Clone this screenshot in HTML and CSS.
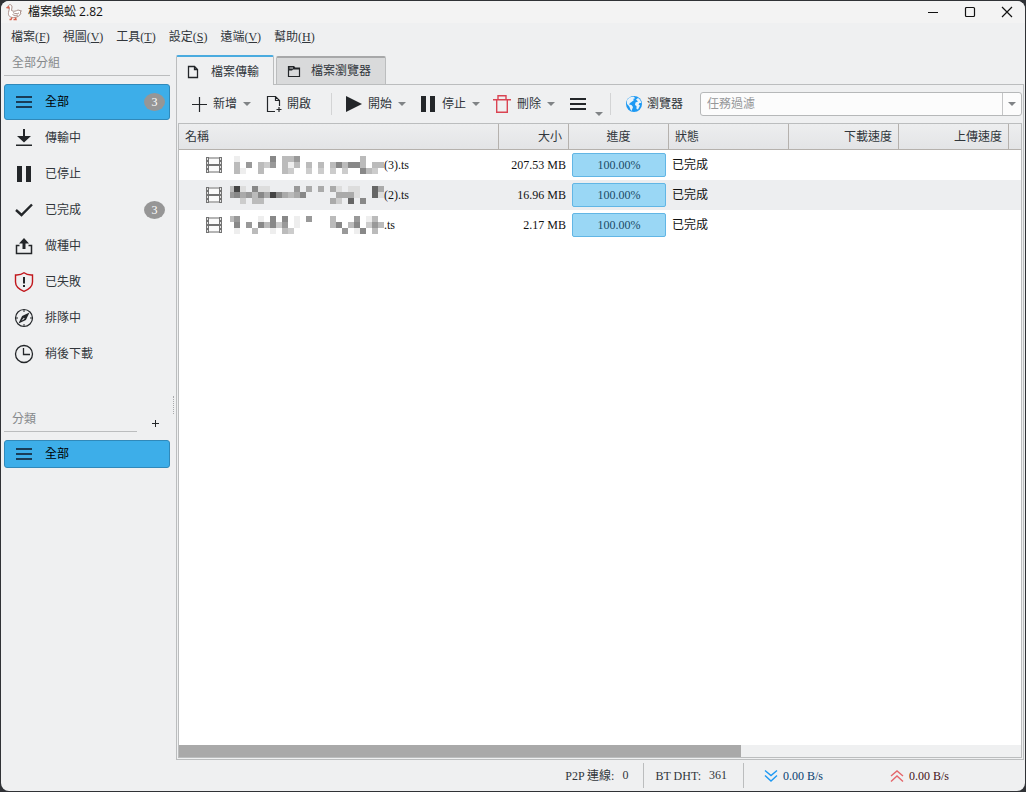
FILE: index.html
```html
<!DOCTYPE html>
<html lang="zh-Hant">
<head>
<meta charset="utf-8">
<title>檔案蜈蚣 2.82</title>
<link rel="stylesheet" href="styles.css">
</head>
<body>
<div class="window">
  <header class="titlebar">
    <svg class="logo" width="16" height="18" viewBox="0 0 16 18" fill="#fff" stroke="#a98f89" stroke-width="1"><path d="M2 3.500C2.500 1 6 1 6 4L5.500 7.500C8 9 10 8 12 7l3.500 1-1.500 1 1 1c-1 3-4 4.500-7.500 4.500S2 13 2.500 9.500L3.500 5z"/><path d="M7 9.500c2 1.500 4 1.500 6 .5M6.500 11.500c2 1.500 4 1 5.500.500"/><path d="M3 3.500L.5 4.700l2.500.5z" fill="#e0705a" stroke="#d8604c"/><path d="M6 14.500L5 16.500H3.500M9.500 14.500l.5 2H7.500" fill="none" stroke="#d8604c" stroke-width="1.400"/></svg>
    <h1 class="title">檔案蜈蚣 2.82</h1>
    <div class="window-buttons">
      <button aria-label="最小化"><svg width="12" height="12" viewBox="0 0 12 12"><path d="M1 6.500h10"/></svg></button>
      <button aria-label="最大化"><svg width="12" height="12" viewBox="0 0 12 12"><rect x="1.500" y="1.500" width="9" height="9" rx="1"/></svg></button>
      <button aria-label="關閉"><svg width="12" height="12" viewBox="0 0 12 12"><path d="M1 1l10 10M11 1L1 11"/></svg></button>
    </div>
  </header>
  <nav class="menubar">
    <button>檔案(<u>F</u>)</button>
    <button>視圖(<u>V</u>)</button>
    <button>工具(<u>T</u>)</button>
    <button>設定(<u>S</u>)</button>
    <button>遠端(<u>V</u>)</button>
    <button>幫助(<u>H</u>)</button>
  </nav>
  <div class="workspace">
    <aside class="sidebar">
      <h2 class="group-title">全部分組</h2>
      <div class="groups">
        <button class="side-item selected"><svg width="20" height="20" viewBox="0 0 20 20" fill="#1a3c56"><path d="M2 4h16v2H2zM2 9h16v2H2zM2 14h16v2H2z"/></svg><span>全部</span><span class="badge">3</span></button>
        <button class="side-item"><svg width="20" height="20" viewBox="0 0 20 20" fill="#232629"><path d="M9 1h2v7h6l-7 6.500L3 8h6zM2 16.500h16V18H2z"/></svg><span>傳輸中</span></button>
        <button class="side-item"><svg width="20" height="20" viewBox="0 0 20 20" fill="#232629"><path d="M3 2h5v16H3zM12 2h5v16h-5z"/></svg><span>已停止</span></button>
        <button class="side-item"><svg width="20" height="20" viewBox="0 0 20 20" fill="none" stroke="#232629" stroke-width="2.400"><path d="M2 10l5.500 5L18 4.500"/></svg><span>已完成</span><span class="badge">3</span></button>
        <button class="side-item"><svg width="20" height="20" viewBox="0 0 20 20"><path d="M10 2l5 5.500h-3.500V13h-3V7.500H5z" fill="#232629"/><path d="M5.500 9.500h-3v8h15v-8h-3" fill="none" stroke="#232629" stroke-width="1.500"/></svg><span>做種中</span></button>
        <button class="side-item"><svg width="20" height="20" viewBox="0 0 20 20"><path d="M10 .8c2.500 2 5.500 2.400 8.500 2.200v7c0 4.500-4 7.500-8.500 9.300C5.500 17.500 1.500 14.500 1.500 10V3C4.500 3.200 7.500 2.800 10 .8z" fill="none" stroke="#c1171c" stroke-width="1.400"/><path d="M9 5h2v6.500H9zM9 13h2v2H9z" fill="#232629"/></svg><span>已失敗</span></button>
        <button class="side-item"><svg width="20" height="20" viewBox="0 0 20 20"><circle cx="10" cy="10" r="8.500" fill="none" stroke="#232629" stroke-width="1.200"/><path d="M10 2v2M10 16v2M2 10h2M16 10h2" stroke="#232629"/><path d="M15.500 4.500l-3.600 7.400L4.500 15.500l3.600-7.400z" fill="#232629"/><path d="M9.300 11.800l1.400-1.200-.8-.8-2.600 3z" fill="#eff0f1"/></svg><span>排隊中</span></button>
        <button class="side-item"><svg width="20" height="20" viewBox="0 0 20 20" fill="none" stroke="#232629" stroke-width="1.300"><circle cx="10" cy="10" r="8.500"/><path d="M9.500 4v6.500H16"/></svg><span>稍後下載</span></button>
      </div>
      <div class="category-head">
        <h2 class="group-title">分類</h2>
        <button class="add" aria-label="新增分類"><svg width="7" height="7" viewBox="0 0 7 7"><path d="M0 3.500h7M3.500 0v7" stroke="#232629"/></svg></button>
      </div>
      <button class="side-item compact selected"><svg width="20" height="20" viewBox="0 0 20 20" fill="#1a3c56"><path d="M2 4h16v2H2zM2 9h16v2H2zM2 14h16v2H2z"/></svg><span>全部</span></button>
    </aside>
    <div class="splitter"><span></span></div>
    <main class="main">
      <div class="tabs" role="tablist">
        <button class="tab active" role="tab" aria-selected="true"><svg width="12" height="14" viewBox="0 0 12 14" fill="none" stroke="#232629" stroke-width="1.300"><path d="M1.500 1.500h6l3 3v8h-9zM7.500 1.500v3h3"/></svg>檔案傳輸</button>
        <button class="tab" role="tab" aria-selected="false"><svg width="14" height="14" viewBox="0 0 14 14"><path d="M1.500 3v9.500h11V4H8L6.500 2.500h-5z" fill="none" stroke="#232629" stroke-width="1.200"/><path d="M1 2h6l1 2h5v1.500H6L5 6.500H1z" fill="#232629"/><path d="M2.500 3.500H6v1H2.500z" fill="#d9dadb"/></svg>檔案瀏覽器</button>
      </div>
      <div class="panel">
        <div class="toolbar">
          <button class="tool"><svg width="16" height="16" viewBox="0 0 16 16"><path d="M8.500 1v15M1 8.500h15" stroke="#232629" stroke-width="1.200"/></svg>新增<i class="caret"></i></button>
          <button class="tool open"><svg width="16" height="18" viewBox="0 0 16 18" fill="none" stroke="#232629" stroke-width="1.200"><path d="M9 16.500H1.500v-15h8l4 4V11M9.500 1.500v4h4M13 12v5M10.500 14.500h5"/></svg>開啟</button>
          <span class="sep"></span>
          <button class="tool start"><svg width="16" height="16" viewBox="0 0 16 16" fill="#232629"><path d="M0 0l16 8L0 16z"/></svg>開始<i class="caret"></i></button>
          <button class="tool pause"><svg width="15" height="16" viewBox="0 0 15 16" fill="#232629"><path d="M0 0h5v16H0zM9 0h5v16H9z"/></svg>停止<i class="caret"></i></button>
          <button class="tool"><svg width="18" height="18" viewBox="0 0 18 18" fill="none" stroke="#da4453" stroke-width="1.400"><path d="M0 4.700h18M5 4V.7h8V4M3.700 5v12.300h10.600V5"/></svg>刪除<i class="caret"></i></button>
          <button class="tool more" aria-label="更多"><svg width="16" height="12" viewBox="0 0 16 12" fill="#232629"><path d="M0 0h16v2H0zM0 5h16v2H0zM0 10h16v2H0z"/></svg><i class="caret low"></i></button>
          <span class="sep near"></span>
          <button class="tool browse"><svg width="16" height="16" viewBox="0 0 16 16"><circle cx="8" cy="8" r="8" fill="#1d99f3"/><path d="M1 4.500C2.500 1.500 5 .6 8 .8l1 1.500-2 .7 1 1-2.500 2L4 7l-1 1.500 2.500.5 1.500 2-1.500 4C4 13.500 4 11 2.500 9.500L1 8zM10 3.500l2-1.500c2 1 3 3 3.200 5L13.500 7l-1 1.500 1.500 1-2 4-1.500-.5v-3L9 9l.5-2.500 2.500-1z" fill="#e9f2f8"/></svg>瀏覽器</button>
          <div class="filter">
            <input type="text" placeholder="任務過濾" aria-label="任務過濾">
            <button aria-label="過濾紀錄"><i class="caret"></i></button>
          </div>
        </div>
        <div class="table-frame">
          <table class="tasks">
            <colgroup><col class="c-name"><col class="c-size"><col class="c-progress"><col class="c-status"><col class="c-down"><col class="c-up"><col></colgroup>
            <thead>
              <tr><th>名稱</th><th class="right">大小</th><th class="center">進度</th><th>狀態</th><th class="right">下載速度</th><th class="right">上傳速度</th><th></th></tr>
            </thead>
            <tbody>
              <tr><td><div class="file"><svg class="film" width="16" height="16" viewBox="0 0 16 16"><use href="#film"/></svg><svg class="mosaic" width="154" height="30"></svg><span>(3).ts</span></div></td><td class="right">207.53 MB</td><td class="progress"><div>100.00%</div></td><td class="status">已完成</td><td></td><td></td><td></td></tr>
              <tr><td><div class="file"><svg class="film" width="16" height="16" viewBox="0 0 16 16"><use href="#film"/></svg><svg class="mosaic" width="154" height="30"></svg><span>(2).ts</span></div></td><td class="right">16.96 MB</td><td class="progress"><div>100.00%</div></td><td class="status">已完成</td><td></td><td></td><td></td></tr>
              <tr><td><div class="file"><svg class="film" width="16" height="16" viewBox="0 0 16 16"><use href="#film"/></svg><svg class="mosaic" width="154" height="30"></svg><span>.ts</span></div></td><td class="right">2.17 MB</td><td class="progress"><div>100.00%</div></td><td class="status">已完成</td><td></td><td></td><td></td></tr>
            </tbody>
          </table>
          <div class="scrollbar"><span></span></div>
        </div>
      </div>
    </main>
  </div>
  <footer class="statusbar">
    <div class="stat p2p"><span>P2P 連線:</span><span class="value">0</span></div>
    <div class="stat dht"><span>BT DHT:</span><span class="value">361</span></div>
    <div class="speed down"><svg width="14" height="14" viewBox="0 0 14 14"><path d="M1 1.500l6 5 6-5M1 6.500l6 5.500 6-5.500"/></svg>0.00 B/s</div>
    <div class="speed up"><svg width="14" height="14" viewBox="0 0 14 14"><path d="M1 7l6-5 6 5M1 12.500l6-5.500 6 5.500"/></svg>0.00 B/s</div>
  </footer>
</div>
<svg class="symbols" width="0" height="0"><symbol id="film" viewBox="0 0 16 16"><path d="M0 0h16v16H0z" fill="#b4b4b4"/><path d="M3 2h10v5H3zM3 9h10v5H3z" fill="#fafafa"/><path d="M0 0h3v16H0zM13 0h3v16h-3zM3 7h10v2H3z" fill="#737373"/><path d="M1 1h1v2H1zM1 5h1v2H1zM1 9h1v2H1zM1 13h1v2H1zM14 1h1v2h-1zM14 5h1v2h-1zM14 9h1v2h-1zM14 13h1v2h-1z" fill="#e4e4e4"/></symbol></svg>
<script src="mosaic.js"></script>
</body>
</html>
```

FILE: styles.css
```css
* { box-sizing: border-box; }
html, body { height: 100%; margin: 0; }
body {
  background: #303236;
  padding: 1px;
  font: 400 12px/16px "Liberation Serif", "Noto Sans CJK TC", serif;
  color: #31363b;
}
button, input { font: inherit; color: inherit; background: none; border: 0; padding: 0; margin: 0; }
button { display: flex; align-items: center; }
svg { flex: none; display: block; }
h1, h2 { margin: 0; font: inherit; }
.symbols { position: absolute; }

.window { height: 100%; display: flex; flex-direction: column; background: #eff0f1; border-radius: 8px; overflow: hidden; }
.titlebar { display: flex; align-items: center; height: 22px; padding-left: 5px; background: #f3f3f3; }
.title { margin-left: 6px; font: 400 12px/16px "Open Sans", "Noto Sans CJK TC", sans-serif; color: #111; }
.window-buttons { margin-left: auto; display: flex; gap: 25px; padding-right: 12px; }
.window-buttons svg { fill: none; stroke: #111; stroke-width: 1.2; }

.menubar { display: flex; gap: 13px; height: 27px; padding: 1px 0 0 10px; }

.workspace { flex: 1; min-height: 0; display: flex; }
.sidebar { width: 169px; padding-left: 3px; display: flex; flex-direction: column; }
.group-title { flex: none; height: 26px; padding: 5px 8px 0; border-bottom: 1px solid #bbbdbe; color: #85888b; }
.groups { margin-top: 8px; }
.side-item { width: 100%; height: 36px; padding: 0 4px 0 10px; gap: 11px; border: 1px solid transparent; border-left: 0; }
.side-item.compact { height: 28px; margin-top: 8px; }
.side-item.selected { background: #3daee9; border: 1px solid #3089ba; border-radius: 3px; padding-left: 9px; color: #000; }
.badge { margin-left: auto; width: 21px; height: 18px; border-radius: 50%; background: #969696; color: #fff; text-align: center; line-height: 18px; }
.category-head { display: flex; align-items: flex-end; margin-top: 34px; }
.category-head .group-title { width: 133px; }
.add { padding: 4px 11px 5px 15px; }
.splitter { width: 6px; display: flex; align-items: center; justify-content: center; }
.splitter span { height: 18px; border-left: 1px dotted #a8aaac; }

.main { flex: 1; min-width: 0; display: flex; flex-direction: column; padding: 5px 1px 0 0; }
.tabs { display: flex; align-items: flex-end; gap: 2px; height: 30px; margin-bottom: -1px; z-index: 1; }
.tab { height: 29px; gap: 10px; padding: 0 14px 0 10px; background: #d9dadb; border: 1px solid #bbbdbe; border-top: 2px solid #a7a8a9; border-radius: 2px 2px 0 0; }
.tab.active { height: 30px; gap: 12px; padding: 2px 14px 0 10px; background: #eff0f1; border-top: 2px solid #4aabdf; border-bottom: 0; }
.panel { flex: 1; min-height: 0; display: flex; flex-direction: column; border: 1px solid #bbbdbe; padding: 0 1px 1px; }

.toolbar { display: flex; align-items: center; height: 38px; padding-left: 13px; }
.tool { gap: 6px; height: 24px; margin-right: 15px; }
.tool.open { gap: 5px; margin-right: 20px; }
.tool.start { margin-left: 14px; }
.tool.pause { margin-right: 13px; }
.tool.more { margin-right: 7px; gap: 9px; }
.tool.browse { gap: 5px; margin: 0 17px 0 15px; }
.caret { width: 8px; border: 4px solid transparent; border-top-color: #808386; border-bottom: 0; }
.caret.low { align-self: flex-end; }
.sep { width: 1px; height: 22px; background: #d3d4d5; }
.filter { flex: 1; display: flex; height: 24px; background: #fcfcfc; border: 1px solid #b6b8b9; border-radius: 3px; }
.filter input { flex: 1; min-width: 0; padding: 0 6px; }
.filter input::placeholder { color: #96989a; opacity: 1; }
.filter button { width: 19px; justify-content: center; border-left: 1px solid #c4c5c6; }

.table-frame { flex: 1; min-height: 0; display: flex; flex-direction: column; background: #fff; border: 1px solid #bbbdbe; }
.tasks { width: 100%; table-layout: fixed; border-collapse: separate; border-spacing: 0; color: #111; }
.c-name { width: 320px; }
.c-size { width: 70px; }
.c-progress { width: 100px; }
.c-status { width: 120px; }
.c-down, .c-up { width: 110px; }
th { height: 26px; padding: 0 6px; font-weight: inherit; text-align: left; color: #31363b; background: linear-gradient(#edeeef, #e3e4e6); border-right: 1px solid #b5b1ad; border-bottom: 1px solid #b5b1ad; }
th:last-child { border-right: 0; }
td { height: 30px; padding: 0 3px; }
tbody tr:nth-child(even) { background: #edeef0; }
.right { text-align: right; }
.center { text-align: center; }
.file { display: flex; align-items: center; height: 30px; padding-left: 24px; }
.mosaic { margin-left: 8px; }
.progress div { height: 24px; border: 1px solid #62b6e5; border-radius: 2px; background: #9ad7f5; color: #1b4a66; text-align: center; line-height: 22px; }
.scrollbar { height: 12px; margin-top: auto; background: #eff0f1; }
.scrollbar span { display: block; width: 66.7%; height: 100%; background: #a9a9a9; }

.statusbar { display: flex; align-items: center; justify-content: flex-end; height: 31px; padding-right: 76px; }
.stat { display: flex; align-items: center; height: 25px; gap: 8px; border-right: 1px solid #bbbdbe; }
.value { padding-bottom: 2px; }
.p2p { padding-right: 15px; }
.dht { padding: 0 16px 0 11px; }
.speed { display: flex; align-items: center; gap: 5px; }
.speed svg { fill: none; stroke-width: 1.4; }
.down { margin: 0 67px 0 20px; color: #0a4070; }
.down svg { stroke: #1d99f3; }
.up { color: #451418; }
.up svg { stroke: #e4666b; }
```

FILE: mosaic.js
```js
// Each string is a strip of 6px cells; a hex digit is the grey level, a dot is empty.
const strips = [
  [
    ".e.....8.bb9..........b...",
    ".b.9.bc9.beb.b.b.b8b88b.bb",
    ".be..b...bc..c.c.c.c..8bc."
  ],
  [
    "b4d.8dd....9.a.a.ad.dd..6a",
    "98a9b8a48aba8.....aaad..6d",
    "..c.bb...........ac.6.8..."
  ],
  [
    "b9...e.8.8.e.9...b...9.eb.",
    ".8.9.8b8c9.e.....b8.b8.c9b",
    ".e..b..e.bc........9.e8.b."
  ]
];
document.querySelectorAll(".mosaic").forEach((svg, row) => {
  strips[row].forEach((strip, line) => {
    [...strip].forEach((level, col) => {
      if (level === ".") return;
      const cell = document.createElementNS("http://www.w3.org/2000/svg", "rect");
      cell.setAttribute("x", col * 6 - 2);
      cell.setAttribute("y", line * 6 + 6);
      cell.setAttribute("width", 6);
      cell.setAttribute("height", 6);
      cell.setAttribute("fill", "#" + level.repeat(3));
      svg.append(cell);
    });
  });
});
```
